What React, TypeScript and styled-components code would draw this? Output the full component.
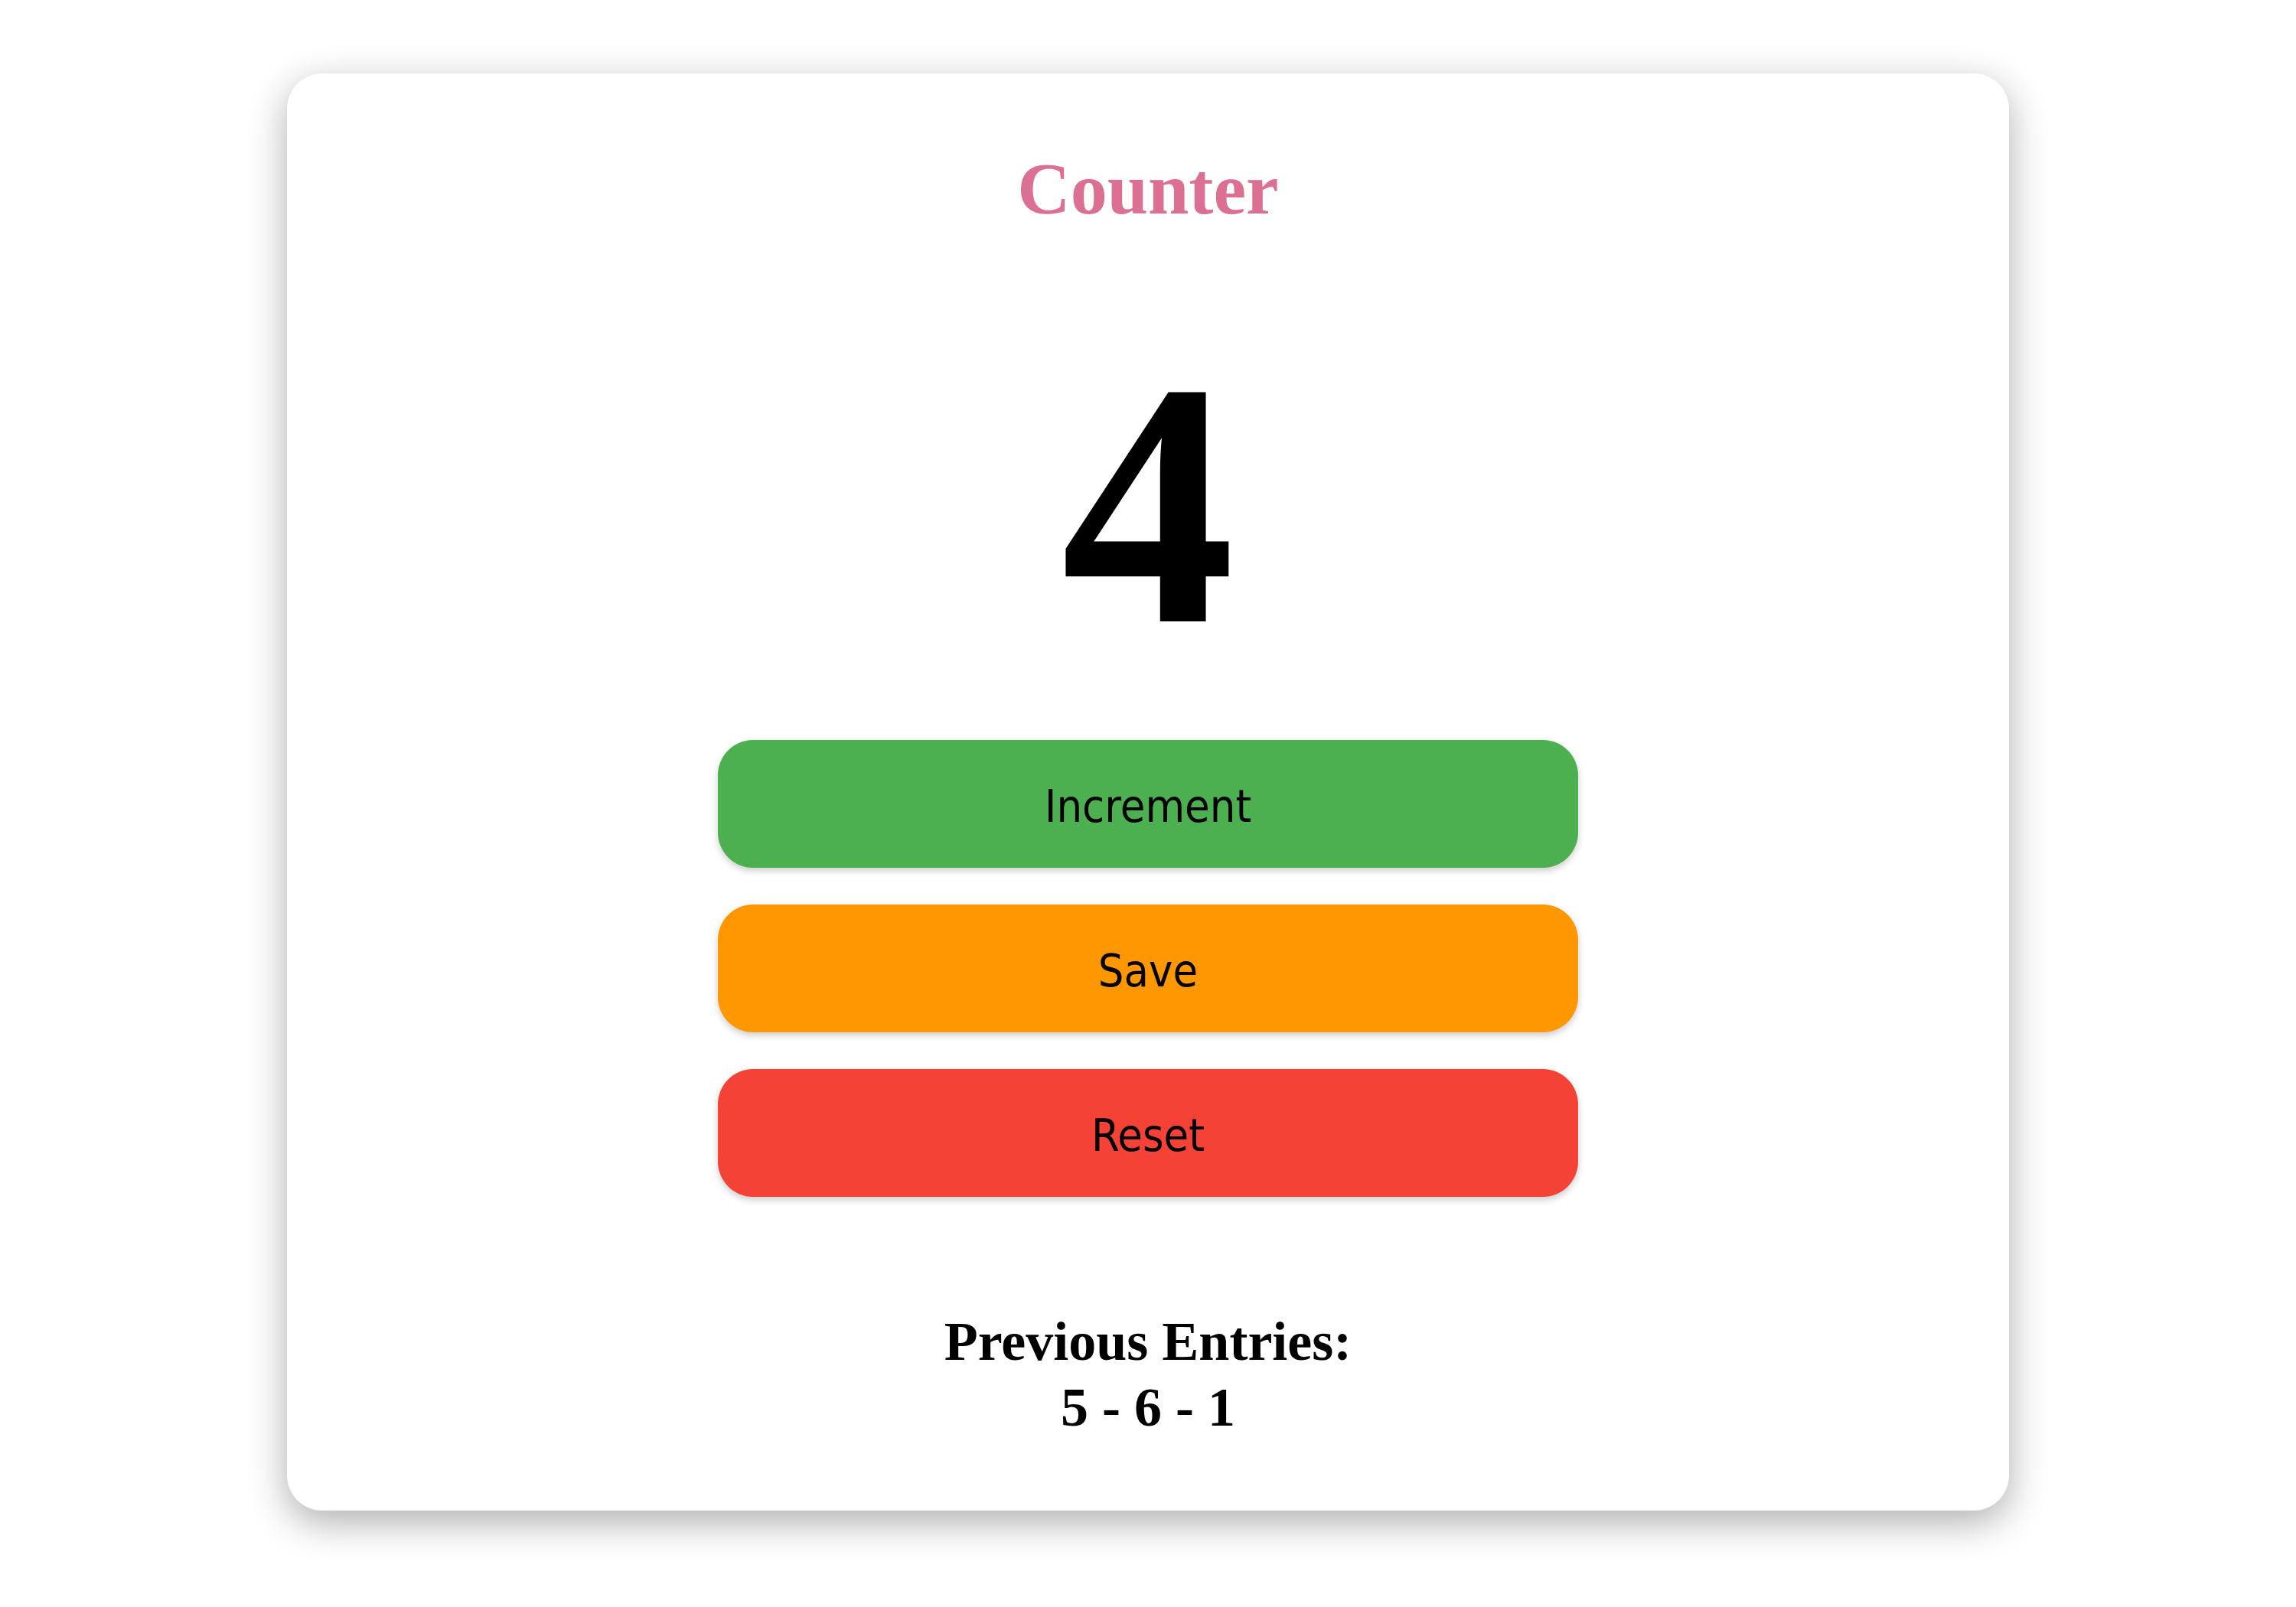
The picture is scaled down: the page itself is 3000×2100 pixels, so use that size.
import React from 'react';
import styled, { createGlobalStyle } from 'styled-components';

// *global styles
const GlobalStyle = createGlobalStyle`
  html, body {
    margin: 0;
    padding: 0;
    background-color: #fff;
  }
  body {
    font-family: "Liberation Serif", "Times New Roman", serif;
  }
`;

// *styled components
const Page = styled.div`
  min-height: 100vh;
  box-sizing: border-box;
  display: flex;
  justify-content: center;
  align-items: flex-start;
  padding: 96px 0 125px;
`;

const Card = styled.div`
  width: 2250px;
  background-color: #fff;
  border-radius: 46px;
  box-shadow: 0 15px 50px rgba(0, 0, 0, 0.32);
  padding: 103px 0 92px;
  display: flex;
  flex-direction: column;
  align-items: center;
  text-align: center;
`;

const Title = styled.h1`
  margin: 0;
  font-size: 96px;
  line-height: 96px;
  font-weight: bold;
  color: #db7093;
`;

const Count = styled.div`
  margin-top: 136px;
  font-size: 455px;
  line-height: 455px;
  font-weight: bold;
  color: #000;
`;

const Buttons = styled.div`
  margin-top: 81px;
  width: 1124px;
  display: flex;
  flex-direction: column;
  gap: 48px;
`;

interface IButton {
  color: string;
}
const ActionButton = styled.button<IButton>`
  height: 167px;
  padding: 6px 0 0;
  border: none;
  border-radius: 46px;
  background-color: ${(props) => props.color};
  box-shadow: 0 4px 10px rgba(0, 0, 0, 0.2);
  font-family: "DejaVu Sans Condensed", "DejaVu Sans", sans-serif;
  font-stretch: condensed;
  font-size: 59px;
  color: #000;
  cursor: pointer;
`;

const Entries = styled.div`
  margin-top: 146px;
  font-size: 72px;
  line-height: 86px;
  font-weight: bold;
  color: #000;
`;

const EntryLine = styled.div`
  display: block;
`;

// *Main component
const App = () => {
  const [count, setCount] = React.useState<number>(4);
  const [entries, setEntries] = React.useState<number[]>([5, 6, 1]);

  return (
    <>
      <GlobalStyle />
      <Page>
        <Card>
          <Title>Counter</Title>
          <Count>{count}</Count>
          <Buttons>
            <ActionButton color="#4caf50" onClick={() => setCount(count + 1)}>Increment</ActionButton>
            <ActionButton color="#ff9800" onClick={() => { setEntries([...entries, count]); setCount(0) }}>Save</ActionButton>
            <ActionButton color="#f44336" onClick={() => setCount(0)}>Reset</ActionButton>
          </Buttons>
          <Entries>
            <EntryLine>Previous Entries:</EntryLine>
            <EntryLine>{entries.join(' - ')}</EntryLine>
          </Entries>
        </Card>
      </Page>
    </>
  )
}

export default App
